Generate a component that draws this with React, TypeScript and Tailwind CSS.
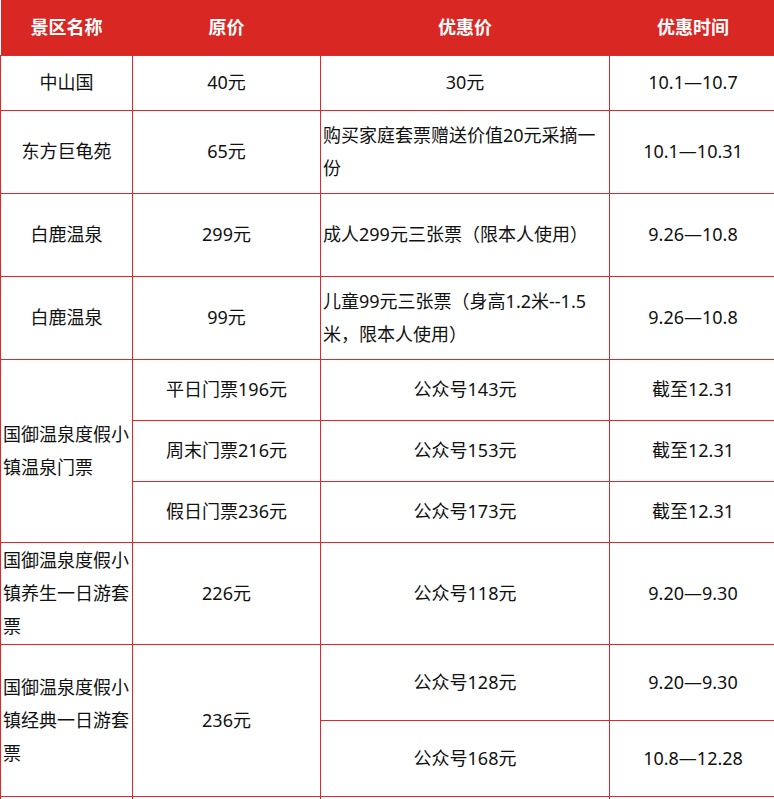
import React from 'react';

const cell = 'border border-[#e0282a] text-[18px] leading-[33px] text-[#111] px-[2px] align-middle';
const center = `${cell} text-center`;
const left = `${cell} text-left`;

export default function App() {
  return (
    <div
      className="w-[774px] h-[799px] overflow-hidden bg-white"
      style={{ fontFamily: '"Noto Sans", "Noto Sans CJK SC", sans-serif' }}
    >
      <table className="table-fixed border-collapse w-[776px]">
        <colgroup>
          <col className="w-[132px]" />
          <col className="w-[188px]" />
          <col className="w-[289px]" />
          <col className="w-[167px]" />
        </colgroup>
        <thead>
          <tr className="h-[55px] bg-[#d92824] text-white">
            <th className="text-[18px] font-bold">景区名称</th>
            <th className="text-[18px] font-bold">原价</th>
            <th className="text-[18px] font-bold">优惠价</th>
            <th className="text-[18px] font-bold">优惠时间</th>
          </tr>
        </thead>
        <tbody>
          <tr className="h-[55px]">
            <td className={center}>中山国</td>
            <td className={center}>40元</td>
            <td className={center}>30元</td>
            <td className={center}>10.1—10.7</td>
          </tr>
          <tr className="h-[83px]">
            <td className={center}>东方巨龟苑</td>
            <td className={center}>65元</td>
            <td className={left}>购买家庭套票赠送价值20元采摘一份</td>
            <td className={center}>10.1—10.31</td>
          </tr>
          <tr className="h-[83px]">
            <td className={center}>白鹿温泉</td>
            <td className={center}>299元</td>
            <td className={left}>成人299元三张票（限本人使用）</td>
            <td className={center}>9.26—10.8</td>
          </tr>
          <tr className="h-[83px]">
            <td className={center}>白鹿温泉</td>
            <td className={center}>99元</td>
            <td className={left}>儿童99元三张票（身高1.2米--1.5米，限本人使用）</td>
            <td className={center}>9.26—10.8</td>
          </tr>
          <tr className="h-[61px]">
            <td className={left} rowSpan={3}>国御温泉度假小镇温泉门票</td>
            <td className={center}>平日门票196元</td>
            <td className={center}>公众号143元</td>
            <td className={center}>截至12.31</td>
          </tr>
          <tr className="h-[61px]">
            <td className={center}>周末门票216元</td>
            <td className={center}>公众号153元</td>
            <td className={center}>截至12.31</td>
          </tr>
          <tr className="h-[61px]">
            <td className={center}>假日门票236元</td>
            <td className={center}>公众号173元</td>
            <td className={center}>截至12.31</td>
          </tr>
          <tr className="h-[102px]">
            <td className={left}>国御温泉度假小镇养生一日游套票</td>
            <td className={center}>226元</td>
            <td className={center}>公众号118元</td>
            <td className={center}>9.20—9.30</td>
          </tr>
          <tr className="h-[76px]">
            <td className={left} rowSpan={2}>国御温泉度假小镇经典一日游套票</td>
            <td className={center} rowSpan={2}>236元</td>
            <td className={center}>公众号128元</td>
            <td className={center}>9.20—9.30</td>
          </tr>
          <tr className="h-[76px]">
            <td className={center}>公众号168元</td>
            <td className={center}>10.8—12.28</td>
          </tr>
          <tr className="h-[55px]">
            <td className={center}></td>
            <td className={center}></td>
            <td className={center}></td>
            <td className={center}></td>
          </tr>
        </tbody>
      </table>
    </div>
  );
}
